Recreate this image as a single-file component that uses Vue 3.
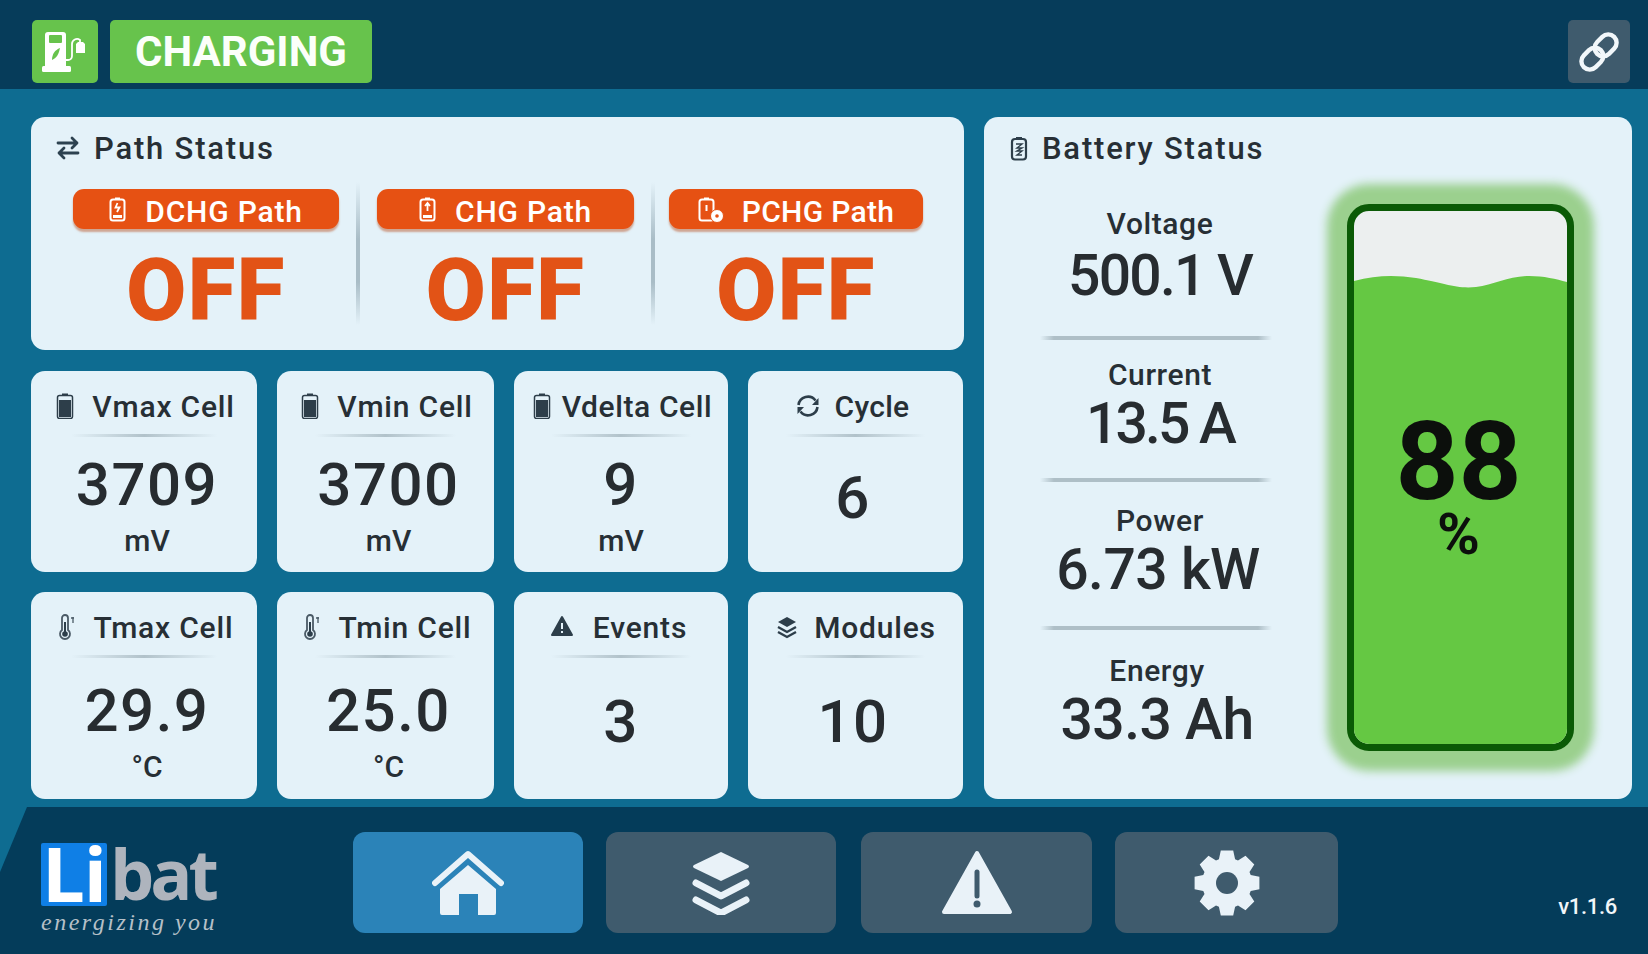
<script setup>
const paths = [
  { name: 'DCHG Path', icon: 'down' },
  { name: 'CHG Path', icon: 'up' },
  { name: 'PCHG Path', icon: 'pre' },
]
const cells = [
  { title: 'Vmax Cell', icon: 'batt', value: '3709', unit: 'mV' },
  { title: 'Vmin Cell', icon: 'batt', value: '3700', unit: 'mV' },
  { title: 'Vdelta Cell', icon: 'batt', value: '9', unit: 'mV' },
  { title: 'Cycle', icon: 'cycle', value: '6' },
  { title: 'Tmax Cell', icon: 'temp', value: '29.9', unit: '°C' },
  { title: 'Tmin Cell', icon: 'temp', value: '25.0', unit: '°C' },
  { title: 'Events', icon: 'warn', value: '3' },
  { title: 'Modules', icon: 'layers', value: '10' },
]
const metrics = [
  { label: 'Voltage', value: '500.1 V' },
  { label: 'Current', value: '13.5 A' },
  { label: 'Power', value: '6.73 kW' },
  { label: 'Energy', value: '33.3 Ah' },
]
function gearPath(cx, cy, ro, ri, teeth) {
  const step = (Math.PI * 2) / teeth
  const pts = []
  for (let i = 0; i < teeth; i++) {
    const a = i * step - Math.PI / 2
    const offs = [[-0.42, ri], [-0.24, ro], [0.24, ro], [0.42, ri]]
    for (const [o, r] of offs) {
      const t = a + o * step
      pts.push((cx + r * Math.cos(t)).toFixed(1) + ' ' + (cy + r * Math.sin(t)).toFixed(1))
    }
  }
  return 'M' + pts.join('L') + 'Z'
}
const gear = gearPath(33, 33, 33, 25, 8)
</script>

<template>
  <div class="screen">
    <header class="topbar">
      <div class="badge badge-icon">
        <svg width="46" height="42" viewBox="0 0 46 42">
          <path d="M3 4a3 3 0 0 1 3-3h15a3 3 0 0 1 3 3V35H3z" fill="#fff" />
          <rect x="7" y="4" width="13" height="8" rx="1" fill="#67c34c" />
          <path d="M10 29c0-6 3-10 8-12-1 5-3 10-8 12z" fill="#67c34c" />
          <rect x="0" y="35" width="29" height="6" rx="1.500" fill="#fff" />
          <path d="M24 29h2a4 4 0 0 0 4-4V13a5 5 0 0 1 8-4v3" fill="none" stroke="#fff" stroke-width="1.800" />
          <path d="M34 13l2-2h5l2 2v9h-9z" fill="#fff" />
        </svg>
      </div>
      <div class="badge badge-text">CHARGING</div>
      <button class="link-btn" aria-label="Connection">
        <svg width="46" height="46" viewBox="0 0 44 44">
          <g fill="none" stroke="#f2f7fa" stroke-width="4.200" transform="rotate(-45 22 22)">
            <rect x="1.500" y="14" width="23" height="16" rx="8" />
            <rect x="19.500" y="14" width="23" height="16" rx="8" />
          </g>
        </svg>
      </button>
    </header>

    <main class="content">
      <div class="left">
        <section class="card path-card">
          <h2 class="card-title">
            <svg class="title-icon" width="26" height="24" viewBox="0 0 26 24">
              <path d="M3 7h19M17 2l5 5-5 5M23 17H4M9 12l-5 5 5 5" fill="none" stroke="#2d4250" stroke-width="2.800" stroke-linecap="round" stroke-linejoin="round" />
            </svg>
            <span>Path Status</span>
          </h2>
          <div class="path-row">
            <div v-for="p in paths" :key="p.name" class="path-col">
              <div class="pill">
                <svg class="pill-icon" :class="{ wide: p.icon === 'pre' }" width="17" height="26" viewBox="0 0 17 26">
                  <path d="M6 1.500h5v2H6z" fill="#fff" />
                  <rect x="1.500" y="3.500" width="14" height="21" rx="2.500" fill="none" stroke="#fff" stroke-width="2" />
                  <rect v-if="p.icon !== 'pre'" x="4" y="19" width="9" height="3" fill="#fff" />
                  <path v-if="p.icon === 'down'" d="M8.500 7l-2 4.500h4L8 16" fill="none" stroke="#fff" stroke-width="1.800" />
                  <path v-else-if="p.icon === 'up'" d="M8.500 7v8M6 10l2.500-3 2.500 3" fill="none" stroke="#fff" stroke-width="1.800" />
                  <path v-else d="M8.500 9v6" stroke="#fff" stroke-width="2" />
                  <template v-if="p.icon === 'pre'">
                    <circle cx="19" cy="20" r="6.500" fill="#fff" stroke="#e65113" stroke-width="1" />
                    <circle cx="19" cy="20" r="1.800" fill="#e65113" />
                  </template>
                </svg>
                <span class="pill-text">{{ p.name }}</span>
              </div>
              <div class="off">OFF</div>
            </div>
          </div>
        </section>

        <section class="cells">
          <article v-for="c in cells" :key="c.title" class="card cell">
            <h3 class="cell-title">
              <svg class="cell-icon" width="24" height="26" viewBox="0 0 24 26">
                <template v-if="c.icon === 'batt'">
                  <rect x="9" y="0.500" width="6" height="3" fill="#2d3e4a" />
                  <rect x="4.500" y="2.500" width="15" height="23" rx="2" fill="#e4f2f9" stroke="#2d3e4a" stroke-width="1.500" />
                  <rect x="6" y="7" width="12" height="17" fill="#2d3e4a" />
                </template>
                <template v-else-if="c.icon === 'cycle'">
                  <path d="M2.500 12a9.500 9.500 0 0 1 17-4.500M21.500 14a9.500 9.500 0 0 1-17 4.500" fill="none" stroke="#2d3e4a" stroke-width="2.600" />
                  <path d="M22.500 5v7h-6.500zM1.500 21v-7H8z" fill="#2d3e4a" />
                </template>
                <template v-else-if="c.icon === 'temp'">
                  <path d="M7 4a3 3 0 0 1 6 0v12a5 5 0 1 1-6 0z" fill="none" stroke="#4a5a66" stroke-width="1.800" />
                  <circle cx="10" cy="20" r="2.800" fill="#2d3e4a" />
                  <path d="M10 8v10" stroke="#2d3e4a" stroke-width="2" />
                  <path d="M16 4h3M18 3v6" stroke="#4a5a66" stroke-width="1.300" />
                </template>
                <template v-else-if="c.icon === 'warn'">
                  <path d="M12 3l10 18H2z" fill="#2d3e4a" stroke="#2d3e4a" stroke-width="2" stroke-linejoin="round" />
                  <path d="M12 9v6M12 17v2" stroke="#e4f2f9" stroke-width="2" />
                </template>
                <template v-else>
                  <path d="M12 3l9 5-9 5-9-5z" fill="#2d3e4a" />
                  <path d="M3 13l9 5 9-5M3 18l9 5 9-5" fill="none" stroke="#2d3e4a" stroke-width="2.400" />
                </template>
              </svg>
              <span>{{ c.title }}</span>
            </h3>
            <div class="rule"></div>
            <div class="cell-body" :class="{ 'no-unit': !c.unit }">
              <div class="cell-value">{{ c.value }}</div>
              <div v-if="c.unit" class="cell-unit">{{ c.unit }}</div>
            </div>
          </article>
        </section>
      </div>

      <section class="card battery-card">
        <h2 class="card-title">
          <svg class="title-icon battery-icon" width="18" height="25" viewBox="0 0 18 25">
            <path d="M6 1h6v2H6z" fill="#2d3e4a" />
            <rect x="2" y="3" width="14" height="20.500" rx="3" fill="none" stroke="#2d3e4a" stroke-width="2.200" />
            <path d="M6 8h6l-5 4h5l-5 3h5l-5 4h5" fill="none" stroke="#2d3e4a" stroke-width="1.400" />
          </svg>
          <span>Battery Status</span>
        </h2>
        <div class="battery-body">
          <div class="metrics">
            <div v-for="m in metrics" :key="m.label" class="metric">
              <div class="metric-label">{{ m.label }}</div>
              <div class="metric-value">{{ m.value }}</div>
            </div>
          </div>
          <div class="gauge">
            <svg class="gauge-wave" viewBox="0 0 213 533" preserveAspectRatio="none">
              <path d="M0 70C22 64 42 64 62 67 90 72 102 78 122 76 140 74 155 65 175 65 190 65 202 68 213 71V533H0z" fill="#65c843" />
            </svg>
            <div class="gauge-text">
              <div class="gauge-num">88</div>
              <div class="gauge-pct">%</div>
            </div>
          </div>
        </div>
      </section>
    </main>

    <footer class="footer">
      <div class="logo">
        <div class="logo-mark">
          <span class="logo-li">Li</span><span class="logo-bat">bat</span>
        </div>
        <div class="logo-tag">energizing you</div>
      </div>
      <nav class="nav">
        <button class="nav-btn active" aria-label="Home">
          <svg width="72" height="66" viewBox="0 0 72 66">
            <path d="M3 33L36 4l33 29" fill="none" stroke="#e9f2f8" stroke-width="6" stroke-linecap="round" stroke-linejoin="round" />
            <path d="M36 15L64 39v24a2 2 0 0 1-2 2H46V44H27v21H10a2 2 0 0 1-2-2V39z" fill="#e9f2f8" />
          </svg>
        </button>
        <button class="nav-btn" aria-label="Modules">
          <svg width="58" height="64" viewBox="0 0 58 64">
            <path d="M29 1L56 14Q58 15.500 56 17L29 30 2 17Q0 15.500 2 14z" fill="#e9f2f8" />
            <path d="M4 32l25 13 25-13M4 49l25 13 25-13" fill="none" stroke="#e9f2f8" stroke-width="7" stroke-linecap="round" stroke-linejoin="round" />
          </svg>
        </button>
        <button class="nav-btn" aria-label="Events">
          <svg width="72" height="66" viewBox="0 0 72 66">
            <path d="M36 3L69 62H3z" fill="#e9f2f8" stroke="#e9f2f8" stroke-width="4" stroke-linejoin="round" />
            <path d="M36 22v24" stroke="#3f5b6d" stroke-width="5" stroke-linecap="round" />
            <circle cx="36" cy="54" r="3.500" fill="#3f5b6d" />
          </svg>
        </button>
        <button class="nav-btn" aria-label="Settings">
          <svg width="66" height="66" viewBox="0 0 66 66">
            <path :d="gear" fill="#e9f2f8" />
            <circle cx="33" cy="33" r="11" fill="#3f5b6d" />
          </svg>
        </button>
      </nav>
      <div class="version">v1.1.6</div>
    </footer>
  </div>
</template>

<style>
html, body { margin: 0; background: #0e6c91; }
</style>

<style scoped>
.screen {
  width: 1648px;
  height: 954px;
  display: flex;
  flex-direction: column;
  overflow: hidden;
  background: #0e6c91;
  color: #272f35;
  font-family: Roboto, "Liberation Sans", sans-serif;
}
.topbar {
  height: 89px;
  box-sizing: border-box;
  padding: 20px 18px 6px 32px;
  display: flex;
  gap: 12px;
  background: #063c5a;
}
.badge {
  height: 63px;
  background: #67c34c;
  border-radius: 5px;
  display: flex;
  align-items: center;
  justify-content: center;
}
.badge-icon { width: 66px; }
.badge-text {
  width: 262px;
  color: #fbfffa;
  font-size: 42px;
  font-weight: 700;
  letter-spacing: 0;
}
.link-btn {
  margin-left: auto;
  width: 62px;
  height: 63px;
  padding: 0;
  border: 0;
  border-radius: 5px;
  background: #3f5b6d;
  display: flex;
  align-items: center;
  justify-content: center;
}
.content {
  flex: 1;
  min-height: 0;
  box-sizing: border-box;
  padding: 28px 16px 8px 31px;
  display: flex;
  gap: 20px;
}
.left {
  width: 933px;
  display: flex;
  flex-direction: column;
  gap: 21px;
}
.card {
  background: #e4f2f9;
  border-radius: 14px;
}
.card-title {
  margin: 0;
  height: 30px;
  display: flex;
  align-items: center;
  font-size: 31px;
  font-weight: 500;
  letter-spacing: 1.8px;
  color: #272f35;
}
.title-icon { margin-right: 13px; }
.path-card {
  height: 233px;
  box-sizing: border-box;
  padding: 16px 0 0 24px;
}
.path-row {
  display: flex;
  margin: 19px 0 0 18px;
}
.path-col {
  box-sizing: border-box;
  display: flex;
  flex-direction: column;
  align-items: center;
  padding: 7px 0 0;
  height: 143px;
  position: relative;
  width: 266px;
  margin-right: 38px;
}
.path-col:nth-child(2) { width: 257px; margin-right: 35px; }
.path-col:nth-child(3) { width: 254px; margin-right: 0; }
.path-col:not(:last-child)::after {
  content: "";
  position: absolute;
  top: 0;
  bottom: 0;
  right: -21px;
  width: 4px;
  background: linear-gradient(180deg, rgba(170,190,200,0), #a9bdc7 40%, #a9bdc7 70%, rgba(170,190,200,0));
}
.pill {
  width: 100%;
  height: 42px;
  background: #e65113;
  border-radius: 11px;
  box-shadow: 0 3px 2px rgba(190, 100, 60, .55);
  color: #fff;
  display: flex;
  align-items: center;
  justify-content: center;
  gap: 19px;
  font-size: 30px;
  font-weight: 500;
  letter-spacing: .8px;
}
.pill-icon { overflow: visible; }
.pill-icon.wide { margin-right: 8px; }
.pill-text { padding-top: 5px; }
.path-col:nth-child(3) .pill-text { letter-spacing: .3px; }
.off {
  margin-top: 17px;
  height: 88px;
  line-height: 88px;
  font-size: 87px;
  font-weight: 900;
  letter-spacing: 1.5px;
  color: #e25316;
}
.cells {
  display: grid;
  grid-template-columns: 226px 217px 214px 215px;
  grid-template-rows: 201px 207px;
  gap: 20px;
}
.cell {
  box-sizing: border-box;
  padding: 20px 0 8px;
  display: flex;
  flex-direction: column;
  align-items: center;
}
.cell-title {
  margin: 0;
  height: 30px;
  display: flex;
  align-items: center;
  gap: 15px;
  white-space: nowrap;
  font-size: 30px;
  font-weight: 500;
  color: #272f35;
  letter-spacing: .8px;
}
.cell:nth-child(3) .cell-title { gap: 8px; letter-spacing: .6px; }
.cell:nth-child(4) .cell-title { letter-spacing: .3px; padding-right: 6px; }
.cell:nth-child(7) .cell-title { gap: 19px; padding-right: 5px; }
.cell-icon { flex: none; }
.rule {
  flex: none;
  width: 65%;
  height: 3px;
  margin-top: 13px;
  background: linear-gradient(90deg, rgba(160,180,190,0), #b1c2ca 50%, rgba(160,180,190,0));
}
.cell-body {
  flex: 1;
  display: flex;
  flex-direction: column;
  align-items: center;
  justify-content: center;
  padding-top: 9px;
}
.cell:nth-child(n+5) .cell-body { padding-top: 13px; }
.cell-body.no-unit,
.cell:nth-child(n+5) .cell-body.no-unit { padding: 0 5px 6px 0; }
.cell:nth-child(7) .cell-body.no-unit { padding-right: 0; }
.cell:nth-child(-n+2) .cell-body,
.cell:nth-child(5) .cell-body,
.cell:nth-child(6) .cell-body { padding-left: 6px; }
.cell-value {
  height: 62px;
  line-height: 62px;
  font-size: 60px;
  font-weight: 500;
  letter-spacing: 1.5px;
  color: #272c30;
}
.cell-unit {
  height: 32px;
  line-height: 32px;
  font-size: 30px;
  font-weight: 500;
  color: #272f35;
  margin-top: 9px;
}
.battery-card {
  flex: 1;
  box-sizing: border-box;
  padding: 16px 0 0 26px;
}
.battery-icon { margin-right: 14px; }
.battery-body {
  display: flex;
  align-items: flex-start;
  margin-top: 40px;
  padding-left: 30px;
}
.metrics {
  width: 232px;
}
.metric {
  box-sizing: border-box;
  text-align: center;
  position: relative;
  padding: 3px 0 39px 8px;
}
.metric:nth-child(2) { padding: 17px 0 33px 8px; }
.metric:nth-child(3) { padding: 21px 0 35px 8px; }
.metric:nth-child(4) { padding: 23px 0 0 2px; }
.metric:nth-child(1) .metric-label { margin-bottom: 9px; }
.metric:nth-child(1) .metric-value { letter-spacing: -1.8px; }
.metric:nth-child(2) .metric-value { letter-spacing: -2.8px; }
.metric:nth-child(3) .metric-value { letter-spacing: -.5px; padding-right: 4px; }
.metric:nth-child(4) .metric-value { letter-spacing: -.5px; }
.metric:not(:last-child)::after {
  content: "";
  position: absolute;
  left: 0;
  right: 0;
  bottom: 0;
  height: 4px;
  background: linear-gradient(90deg, rgba(160,180,190,0), #aebfc7 6%, #aebfc7 94%, rgba(160,180,190,0));
}
.metric-label {
  height: 36px;
  line-height: 36px;
  font-size: 30px;
  font-weight: 500;
  letter-spacing: .6px;
  margin-bottom: 6px;
}
.metric-value {
  height: 50px;
  line-height: 50px;
  font-size: 57px;
  font-weight: 500;
  color: #272c30;
}
.gauge {
  position: relative;
  width: 227px;
  height: 547px;
  margin: 1px 0 0 75px;
  box-sizing: border-box;
  background: #ecefef;
  border: 7px solid #0b5a06;
  border-radius: 22px;
  box-shadow: 0 0 10px 20px #9bd08e;
  overflow: visible;
}
.gauge-wave {
  position: absolute;
  inset: 0;
  width: 100%;
  height: 100%;
  border-radius: 15px;
}
.gauge-text {
  position: absolute;
  left: 0;
  right: 4px;
  top: 207px;
  text-align: center;
  color: #0c0f0c;
  font-weight: 700;
}
.gauge-num {
  height: 88px;
  line-height: 88px;
  font-size: 110px;
}
.gauge-pct {
  height: 56px;
  line-height: 56px;
  margin-top: 0;
  font-size: 58px;
}
.footer {
  height: 147px;
  box-sizing: border-box;
  flex: none;
  display: flex;
  background: #043c5a;
  clip-path: polygon(27px 0, 100% 0, 100% 100%, 0 100%, 0 65px);
  padding: 25px 0 0 41px;
  position: relative;
}
.logo { width: 312px; }
.logo-mark {
  display: flex;
  height: 63px;
  margin-top: 11px;
  font-family: "Open Sans", Roboto, sans-serif;
  font-weight: 700;
}
.logo-li {
  box-sizing: border-box;
  width: 66px;
  height: 63px;
  background: #0f7fe6;
  color: #fff;
  border-radius: 2px;
  font-size: 76px;
  line-height: 60px;
  letter-spacing: -1px;
  text-align: center;
}
.logo-bat {
  margin-left: 3px;
  color: #aeb4bd;
  font-size: 70px;
  line-height: 60px;
  letter-spacing: -4px;
}
.logo-tag {
  margin-top: 2px;
  font-family: "Liberation Serif", serif;
  font-style: italic;
  font-size: 24px;
  line-height: 28px;
  letter-spacing: 2.5px;
  color: #b6c0c8;
  white-space: nowrap;
}
.nav {
  display: flex;
  gap: 23px;
  height: 101px;
}
.nav-btn {
  width: 230px;
  height: 100%;
  border: 0;
  padding: 0;
  border-radius: 12px;
  background: #3f5b6d;
  display: flex;
  align-items: center;
  justify-content: center;
}
.nav-btn.active { background: #2b83b8; }
.nav-btn:nth-child(3) { width: 231px; margin-left: 2px; }
.nav-btn:nth-child(4) { width: 223px; }
.version {
  position: absolute;
  right: 31px;
  top: 86px;
  color: #f1f6f9;
  font-size: 22px;
  font-weight: 500;
  line-height: 28px;
  letter-spacing: -.3px;
}
</style>
